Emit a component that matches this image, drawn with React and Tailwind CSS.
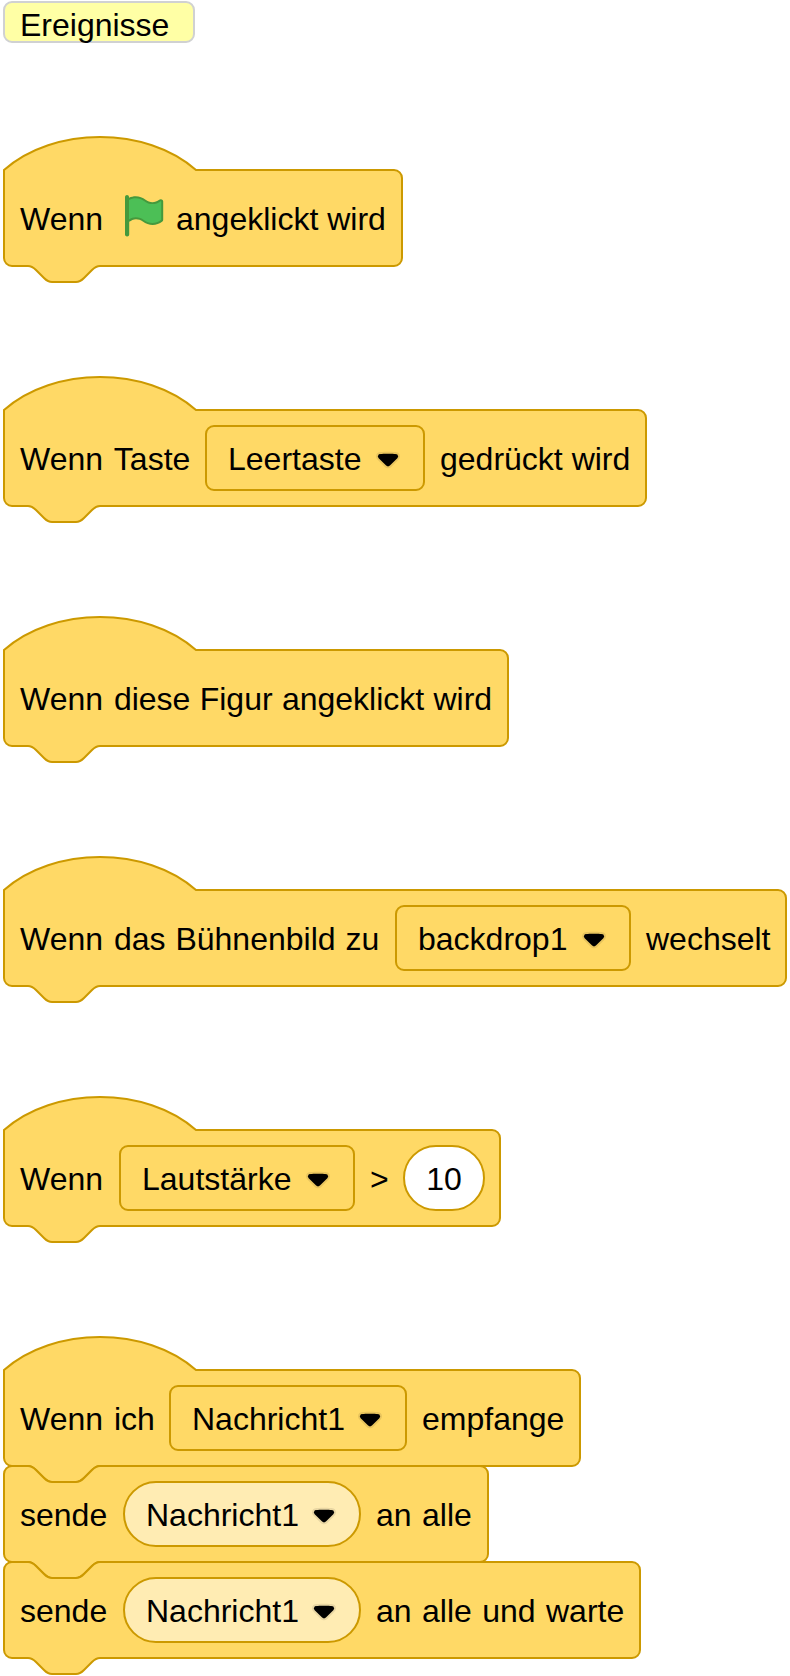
const BUMP =
  "H48 c-2,0 -3,1 -4,2 l-4,4 c-1,1 -2,2 -4,2 h-12 c-2,0 -3,-1 -4,-2 l-4,-4 c-1,-1 -2,-2 -4,-2 H4 a4,4 0 0,1 -4,-4";
const NOTCH =
  "M0,4 a4,4 0 0,1 4,-4 h8 c2,0 3,1 4,2 l4,4 c1,1 2,2 4,2 h12 c2,0 3,-1 4,-2 l4,-4 c1,-1 2,-2 4,-2";

function Block({ width, hat = false, children }) {
  const w = width / 2;
  const start = hat ? "M0,0 c25,-22 71,-22 96,0" : NOTCH;
  return (
    <div className="relative h-24" style={{ width }}>
      <svg
        className="absolute inset-0 size-full overflow-visible"
        viewBox={`0 0 ${w} 48`}
        aria-hidden="true"
      >
        <path
          d={`${start} H${w - 4} a4,4 0 0,1 4,4 v40 a4,4 0 0,1 -4,4 ${BUMP} z`}
          fill="#ffd966"
          stroke="#cc9900"
        />
      </svg>
      <div className="relative flex h-full items-center gap-4 pl-4">{children}</div>
    </div>
  );
}

function Label({ className = "", children }) {
  return (
    <span className={`shrink-0 pt-0.5 whitespace-nowrap ${className}`}>
      {children}
    </span>
  );
}

function Arrow() {
  return (
    <svg className="mt-1 size-6 shrink-0" viewBox="0 0 12.71 8.79" aria-hidden="true">
      <path
        d="M12.71,2.44A2.41,2.41,0,0,1,12,4.16L8.08,8.08a2.45,2.45,0,0,1-3.45,0L.72,4.16A2.42,2.42,0,0,1,0,2.44,2.48,2.48,0,0,1,.71.71C1,.47,1.43,0,6.36,0S11.75.46,12,.71A2.44,2.44,0,0,1,12.71,2.44Z"
        fill="#231f20"
        opacity="0.1"
      />
      <path d="M6.36,7.79a1.43,1.43,0,0,1-1-.42L1.42,3.45a1.44,1.44,0,0,1,0-2c.56-.56,9.31-.56,9.87,0a1.44,1.44,0,0,1,0,2L7.37,7.37A1.43,1.43,0,0,1,6.36,7.79Z" />
    </svg>
  );
}

function Dropdown({ className = "", round = false, children }) {
  const shape = round ? "rounded-[33px] bg-[#ffecb3]" : "rounded-[9px] bg-[#ffd966]";
  return (
    <button
      type="button"
      className={`-m-px flex h-[66px] shrink-0 items-center justify-between border-2 border-[#cc9900] pr-[23px] pl-[21px] ${shape} ${className}`}
    >
      <span className="pt-0.5">{children}</span>
      <Arrow />
    </button>
  );
}

function Flag() {
  return (
    <svg className="-mt-1 -mr-2 size-12 shrink-0" viewBox="0 0 24 24" aria-hidden="true">
      <path
        d="M20.8,3.7c-0.4-0.2-0.9-0.1-1.2,0.2c-2,1.6-4.8,1.6-6.8,0c-2.3-1.9-5.6-2.3-8.3-1v-0.4c0-0.6-0.5-1-1-1s-1,0.4-1,1v18.8c0,0.5,0.5,1,1,1h0.1c0.5,0,1-0.5,1-1v-6.4c1-0.7,2.1-1.2,3.4-1.3c1.2,0,2.4,0.4,3.4,1.2c2.9,2.3,7,2.3,9.8,0c0.3-0.2,0.4-0.5,0.4-0.9V4.7C21.6,4.2,21.3,3.8,20.8,3.7z"
        fill="#45993d"
      />
      <path
        d="M20.6,4.8l0,9.1C18,16,14.4,16,11.9,14c-1.1-0.9-2.5-1.4-4-1.4C6.7,12.6,5.5,13,4.5,13.7V4C7,2.6,10,2.9,12.2,4.6c2.4,1.9,5.7,1.9,8.1,0C20.4,4.5,20.5,4.6,20.6,4.8z"
        fill="#4cbf56"
      />
    </svg>
  );
}

export default function App() {
  return (
    <main className="h-[1676px] w-[790px] overflow-hidden bg-white pt-px pl-1 font-['Liberation_Sans',Arial,sans-serif] text-[32px] leading-9 text-black">
      <h1 className="-ml-px flex h-[42px] w-48 items-center rounded-[9px] border-2 border-[#d0d1d2] bg-[#ffffa5] pt-1.5 pl-[15px]">
        Ereignisse
      </h1>
      <div className="flex flex-col gap-36 pt-[127px]">
        <Block hat width={398}>
          <Label className="w-[84px]">Wenn</Label>
          <Flag />
          <Label>angeklickt wird</Label>
        </Block>
        <Block hat width={642}>
          <Label className="w-[170px] [word-spacing:2.5px]">Wenn Taste</Label>
          <Dropdown className="w-[220px]">Leertaste</Dropdown>
          <Label>gedrückt wird</Label>
        </Block>
        <Block hat width={504}>
          <Label className="[word-spacing:0.4px]">
            <span className="mr-[1.6px]">Wenn</span> diese Figur angeklickt wird
          </Label>
        </Block>
        <Block hat width={782}>
          <Label className="w-[360px] [word-spacing:1px]">
            <span className="mr-px">Wenn</span> das Bühnenbild zu
          </Label>
          <Dropdown className="w-[236px]">backdrop1</Dropdown>
          <Label>wechselt</Label>
        </Block>
        <Block hat width={496}>
          <Label className="w-[84px]">Wenn</Label>
          <Dropdown className="w-[236px]">Lautstärke</Dropdown>
          <Label className="w-[18px]">&gt;</Label>
          <div className="-m-px flex h-[66px] w-[82px] shrink-0 items-center justify-center rounded-[33px] border-2 border-[#cc9900] bg-white pt-0.5">
            10
          </div>
        </Block>
        <div className="flex flex-col">
          <Block hat width={576}>
            <Label className="w-[134px] [word-spacing:2px]">Wenn ich</Label>
            <Dropdown className="w-[238px]">Nachricht1</Dropdown>
            <Label>empfange</Label>
          </Block>
          <Block width={484}>
            <Label className="w-[88px]">sende</Label>
            <Dropdown round className="w-[238px]">Nachricht1</Dropdown>
            <Label className="[word-spacing:1.5px]">an alle</Label>
          </Block>
          <Block width={636}>
            <Label className="w-[88px]">sende</Label>
            <Dropdown round className="w-[238px]">Nachricht1</Dropdown>
            <Label className="[word-spacing:1.5px]">an alle und warte</Label>
          </Block>
        </div>
      </div>
    </main>
  );
}
